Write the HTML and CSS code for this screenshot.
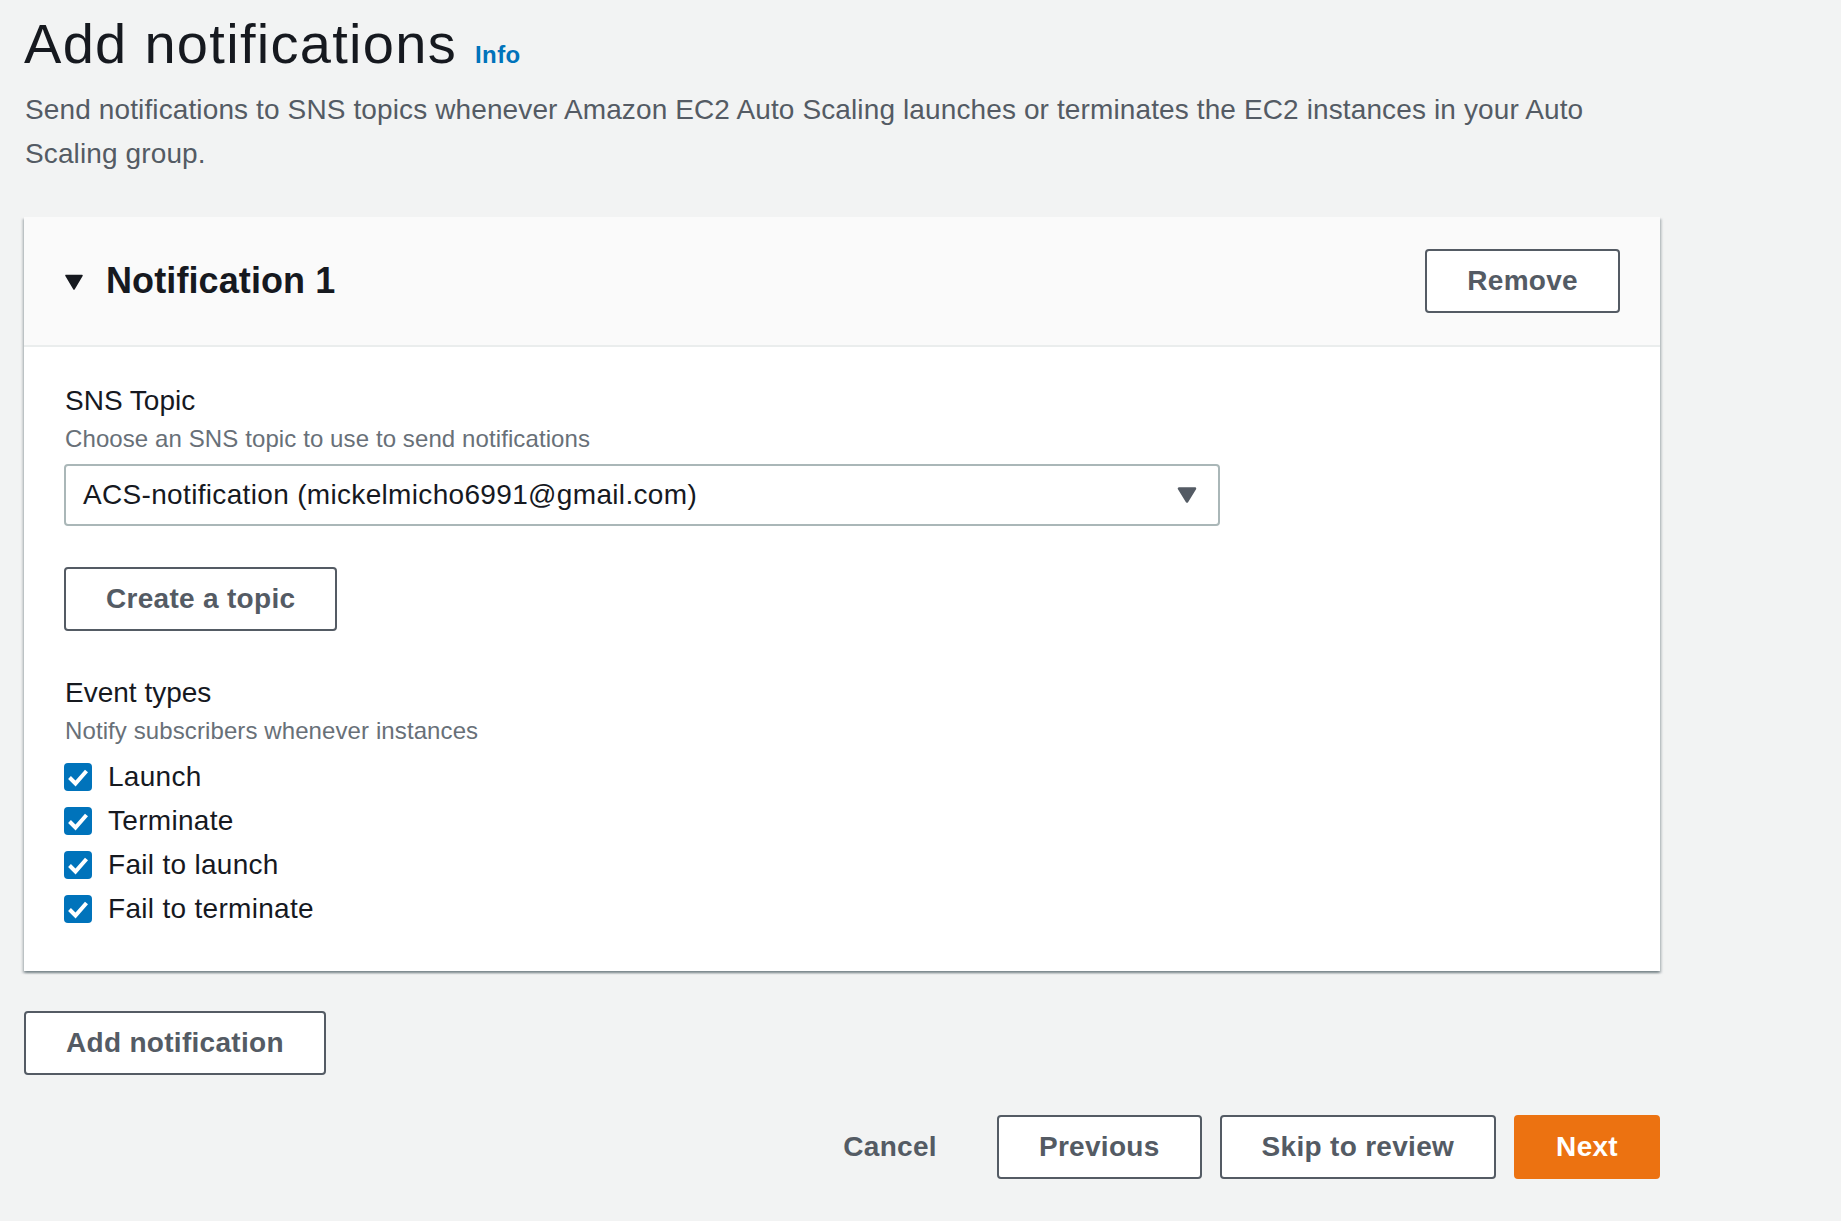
FILE: index.html
```html
<!DOCTYPE html>
<html lang="en">
<head>
<meta charset="utf-8">
<title>Add notifications</title>
<link rel="stylesheet" href="styles.css">
</head>
<body>
<div class="page">
  <div class="title-row">
    <h1 class="title">Add notifications</h1>
    <a class="info" href="#">Info</a>
  </div>
  <p class="intro">Send notifications to SNS topics whenever Amazon EC2 Auto Scaling launches or terminates the EC2 instances in your Auto Scaling group.</p>

  <section class="panel">
    <header class="panel-head">
      <div class="panel-title">
        <svg class="caret" width="20" height="16" viewBox="0 0 20 16"><path d="M2 1.5 L18 1.5 L10 15 Z" fill="#16191f" stroke="#16191f" stroke-width="1.5" stroke-linejoin="round"/></svg>
        <h2 class="panel-name">Notification 1</h2>
      </div>
      <button class="btn">Remove</button>
    </header>
    <div class="panel-body">
      <div class="field-label">SNS Topic</div>
      <div class="field-desc">Choose an SNS topic to use to send notifications</div>
      <div class="select">
        <span class="select-value">ACS-notification (mickelmicho6991@gmail.com)</span>
        <svg class="select-arrow" width="20" height="16" viewBox="0 0 20 16"><path d="M2 1.5 L18 1.5 L10 14.5 Z" fill="#545b64" stroke="#545b64" stroke-width="2.5" stroke-linejoin="round"/></svg>
      </div>
      <button class="btn create">Create a topic</button>

      <div class="field-label events">Event types</div>
      <div class="field-desc">Notify subscribers whenever instances</div>
      <ul class="checks">
        <li class="check"><span class="box"><svg width="28" height="28" viewBox="0 0 28 28"><polyline points="5.5,14.5 11.5,20.5 22.5,8" fill="none" stroke="#fff" stroke-width="4"/></svg></span><span class="check-label">Launch</span></li>
        <li class="check"><span class="box"><svg width="28" height="28" viewBox="0 0 28 28"><polyline points="5.5,14.5 11.5,20.5 22.5,8" fill="none" stroke="#fff" stroke-width="4"/></svg></span><span class="check-label">Terminate</span></li>
        <li class="check"><span class="box"><svg width="28" height="28" viewBox="0 0 28 28"><polyline points="5.5,14.5 11.5,20.5 22.5,8" fill="none" stroke="#fff" stroke-width="4"/></svg></span><span class="check-label">Fail to launch</span></li>
        <li class="check"><span class="box"><svg width="28" height="28" viewBox="0 0 28 28"><polyline points="5.5,14.5 11.5,20.5 22.5,8" fill="none" stroke="#fff" stroke-width="4"/></svg></span><span class="check-label">Fail to terminate</span></li>
      </ul>
    </div>
  </section>

  <div class="add-row">
    <button class="btn">Add notification</button>
  </div>

  <div class="actions">
    <button class="btn link">Cancel</button>
    <button class="btn">Previous</button>
    <button class="btn">Skip to review</button>
    <button class="btn primary">Next</button>
  </div>
</div>
</body>
</html>
```

FILE: styles.css
```css
* { box-sizing: border-box; }

html, body {
  margin: 0;
  padding: 0;
  background: #f2f3f3;
}

body {
  font-family: "Liberation Sans", Arial, sans-serif;
  color: #16191f;
}

.page {
  width: 1660px;
  padding: 8px 0 0 24px;
}

.title-row {
  display: flex;
  align-items: baseline;
}

.title {
  margin: 0;
  font-size: 56px;
  line-height: 72px;
  font-weight: 400;
  letter-spacing: 1.3px;
  color: #16191f;
}

.info {
  margin-left: 18px;
  font-size: 24px;
  font-weight: 700;
  color: #0073bb;
  text-decoration: none;
  letter-spacing: 0.4px;
}

.intro {
  margin: 8px 0 0 1px;
  font-size: 28px;
  line-height: 44px;
  color: #545b64;
  letter-spacing: 0.12px;
}

.panel {
  margin-top: 41px;
  background: #fff;
  box-shadow: 0 2px 2px 0 rgba(0, 28, 36, 0.3), 2px 2px 2px 0 rgba(0, 28, 36, 0.15), -2px 2px 2px 0 rgba(0, 28, 36, 0.15);
}

.panel-head {
  display: flex;
  align-items: center;
  justify-content: space-between;
  padding: 32px 40px;
  background: #fafafa;
  border-bottom: 2px solid #eaeded;
}

.panel-title {
  display: flex;
  align-items: center;
}

.caret {
  display: block;
  margin-right: 22px;
  margin-top: 1px;
}

.panel-name {
  margin: 0;
  font-size: 36px;
  line-height: 44px;
  font-weight: 700;
  color: #16191f;
  letter-spacing: 0.1px;
}

.panel-body {
  padding: 32px 40px 40px;
}

.field-label {
  font-size: 28px;
  line-height: 44px;
  color: #16191f;
  padding-left: 1px;
}

.field-label.events {
  margin-top: 40px;
}

.field-desc {
  font-size: 24px;
  line-height: 32px;
  color: #687078;
  padding-left: 1px;
  letter-spacing: 0.1px;
}

.select {
  margin-top: 9px;
  width: 1156px;
  height: 62px;
  display: flex;
  align-items: center;
  justify-content: space-between;
  padding: 0 21px 0 17px;
  border: 2px solid #aab7b8;
  border-radius: 4px;
  background: #fff;
}

.select-value {
  font-size: 28px;
  line-height: 44px;
  color: #16191f;
  letter-spacing: 0.33px;
}

.select-arrow {
  display: block;
}

.btn {
  display: inline-block;
  font-family: "Liberation Sans", Arial, sans-serif;
  font-size: 28px;
  line-height: 44px;
  font-weight: 700;
  color: #545b64;
  background: #fff;
  border: 2px solid #545b64;
  border-radius: 4px;
  padding: 8px 40px;
  letter-spacing: 0.3px;
  cursor: pointer;
}

.btn.create {
  display: block;
  margin-top: 41px;
}

.checks {
  list-style: none;
  margin: 8px 0 0;
  padding: 0;
}

.check {
  display: flex;
  align-items: center;
  height: 44px;
}

.box {
  width: 28px;
  height: 28px;
  border-radius: 4px;
  background: #0073bb;
  display: block;
  flex: none;
}

.box svg {
  display: block;
}

.check-label {
  margin-left: 16px;
  font-size: 28px;
  line-height: 44px;
  color: #16191f;
  letter-spacing: 0.3px;
}

.add-row {
  margin-top: 40px;
}

.actions {
  margin-top: 40px;
  display: flex;
  justify-content: flex-end;
  gap: 18px;
}

.btn.link {
  border-color: transparent;
  background: transparent;
}

.btn.primary {
  background: #ec7211;
  border-color: #ec7211;
  color: #fff;
}
```
